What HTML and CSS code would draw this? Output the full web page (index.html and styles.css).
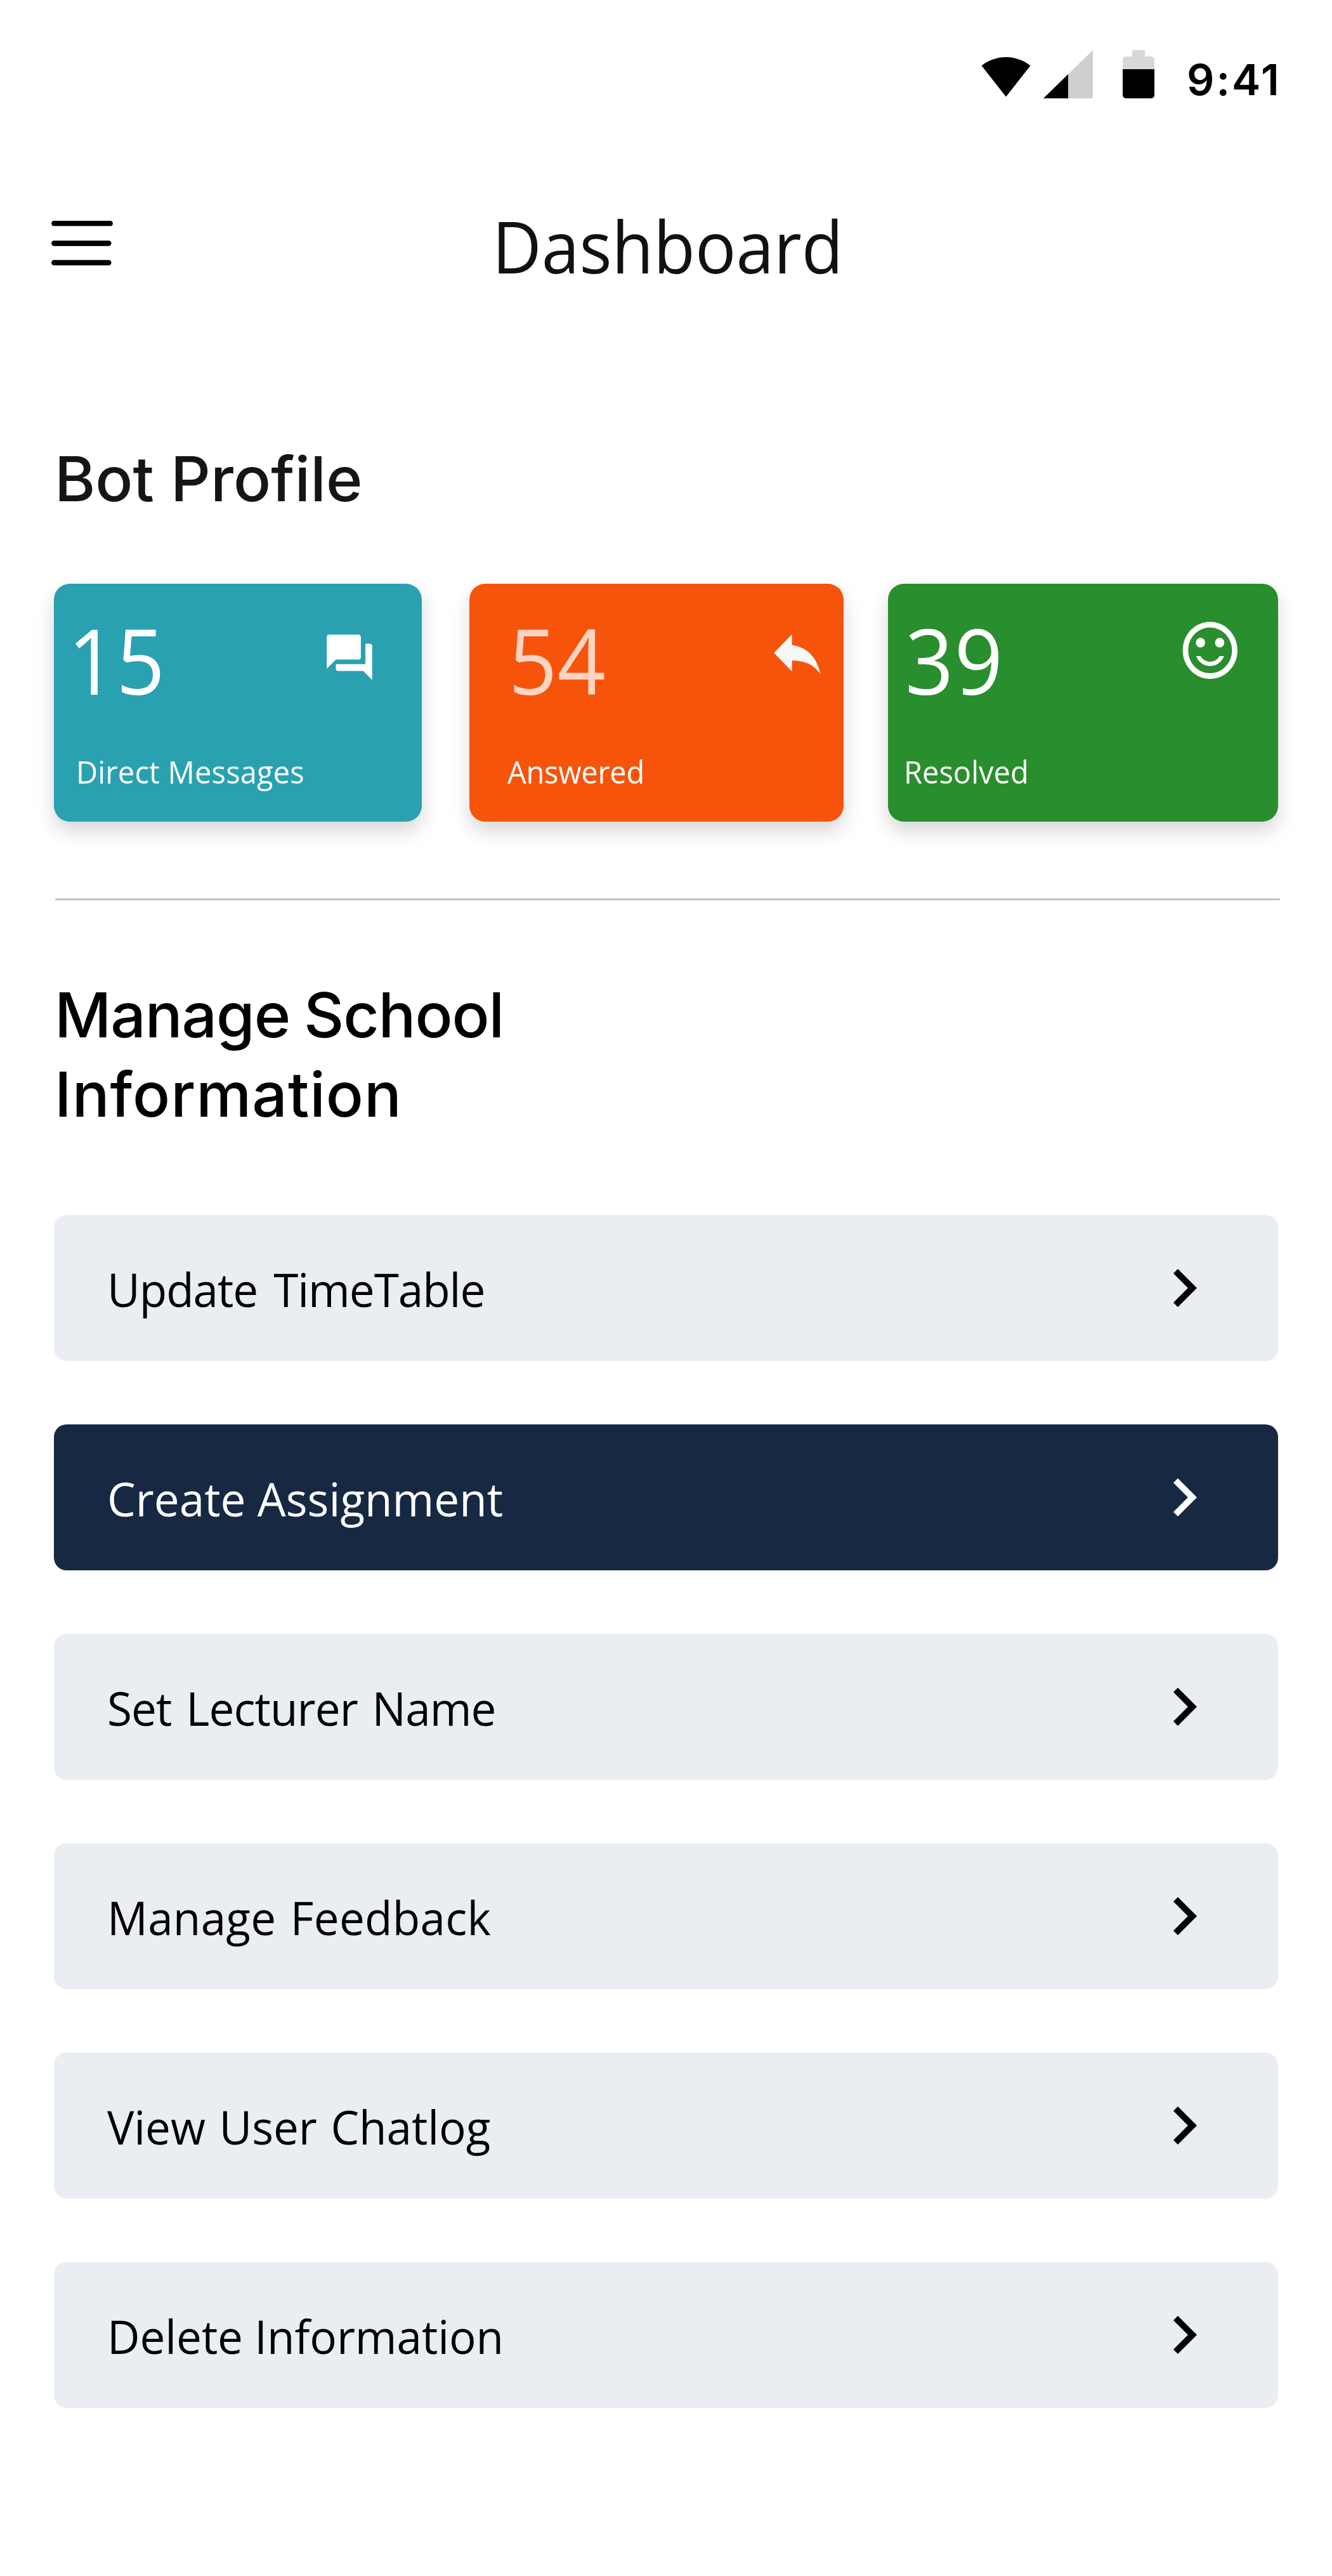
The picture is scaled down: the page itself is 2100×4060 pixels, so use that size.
FILE: index.html
```html
<!DOCTYPE html>
<html lang="en">
<head>
<meta charset="utf-8">
<title>Dashboard</title>
<link rel="stylesheet" href="styles.css">
</head>
<body>
<div class="status-bar">
  <svg class="wifi" width="78" height="76" viewBox="0 0 78 76"><path d="M0.5 24.500C23.500 6.500 54.500 6.500 77.500 24.500L39 73.500Z"/></svg>
  <svg class="signal" width="78" height="76" viewBox="0 0 78 76"><path d="M0 76L78 0V76Z" fill="#cfcfcf"/><path d="M0 76L39 38V76Z"/></svg>
  <svg class="battery" width="50" height="76" viewBox="0 0 50 76"><path d="M15 0H35V10H45Q50 10 50 16V30H0V16Q0 10 5 10H15Z" fill="#d8d8d8"/><path d="M0 30H50V70Q50 76 44 76H6Q0 76 0 70Z"/></svg>
  <span class="time">9:41</span>
</div>

<header class="header">
  <svg class="menu" width="104" height="76" viewBox="0 0 104 76" stroke="#000" stroke-width="8.300" stroke-linecap="round"><path d="M7.200 7.200H95.800M7.200 38.500H93.400M7.200 69H93.400"/></svg>
  <h1 class="title">Dashboard</h1>
</header>

<main>
  <h2 class="heading">Bot Profile</h2>
  <section class="cards">
    <article class="card card-messages">
      <div class="card-text">
        <div class="number">15</div>
        <div class="label">Direct Messages</div>
      </div>
      <svg class="card-icon" width="86" height="86" viewBox="0 0 24 24" fill="#fff"><path d="M21 6h-2v9H6v2c0 .55.45 1 1 1h11l4 4V7c0-.55-.45-1-1-1zm-4 6V3c0-.55-.45-1-1-1H3c-.55 0-1 .45-1 1v14l4-4h10c.55 0 1-.45 1-1z"/></svg>
    </article>
    <article class="card card-answered">
      <div class="card-text">
        <div class="number">54</div>
        <div class="label">Answered</div>
      </div>
      <svg class="card-icon" width="97.500" height="100" viewBox="0 0 24 24" preserveAspectRatio="none" fill="#f7f7f7"><path d="M10 9V5l-7 7 7 7v-4.100c5 0 8.500 1.600 11 5.100-1-5-4-10-11-11z"/></svg>
    </article>
    <article class="card card-resolved">
      <div class="card-text">
        <div class="number">39</div>
        <div class="label">Resolved</div>
      </div>
      <svg class="card-icon" width="103.600" height="108" viewBox="0 0 24 24" preserveAspectRatio="none" fill="#fff"><circle cx="15.500" cy="9.300" r="1.700"/><circle cx="8.500" cy="9.300" r="1.700"/><path d="M12 16c-1.480 0-2.750-.81-3.450-2H6.880c.8 2.050 2.790 3.500 5.120 3.500s4.320-1.450 5.120-3.500h-1.670c-.69 1.190-1.970 2-3.450 2zM12 2C6.470 2 2 6.480 2 12s4.470 10 10 10 10-4.480 10-10S17.520 2 12 2zm0 18c-4.420 0-8-3.580-8-8s3.580-8 8-8 8 3.580 8 8-3.580 8-8 8z"/></svg>
    </article>
  </section>

  <div class="divider"></div>

  <h2 class="heading heading-manage"><span class="line-one">Manage School</span><br><span class="line-two">Information</span></h2>
  <nav class="actions">
    <a class="action"><span class="name">Update TimeTable</span><svg class="chevron" viewBox="0 0 24 24"><path d="M8.590 16.590 13.170 12 8.590 7.410 10 6l6 6-6 6z"/></svg></a>
    <a class="action active"><span class="name">Create Assignment</span><svg class="chevron" viewBox="0 0 24 24"><path d="M8.590 16.590 13.170 12 8.590 7.410 10 6l6 6-6 6z"/></svg></a>
    <a class="action"><span class="name">Set Lecturer Name</span><svg class="chevron" viewBox="0 0 24 24"><path d="M8.590 16.590 13.170 12 8.590 7.410 10 6l6 6-6 6z"/></svg></a>
    <a class="action"><span class="name">Manage Feedback</span><svg class="chevron" viewBox="0 0 24 24"><path d="M8.590 16.590 13.170 12 8.590 7.410 10 6l6 6-6 6z"/></svg></a>
    <a class="action"><span class="name">View User Chatlog</span><svg class="chevron" viewBox="0 0 24 24"><path d="M8.590 16.590 13.170 12 8.590 7.410 10 6l6 6-6 6z"/></svg></a>
    <a class="action"><span class="name">Delete Information</span><svg class="chevron" viewBox="0 0 24 24"><path d="M8.590 16.590 13.170 12 8.590 7.410 10 6l6 6-6 6z"/></svg></a>
  </nav>
</main>
</body>
</html>
```
FILE: styles.css
```css
* { box-sizing: border-box; }

body {
  margin: 0;
  width: 2100px;
  min-height: 4060px;
  background: #fff;
  color: #000;
  font-family: "Open Sans", "Noto Sans", sans-serif;
}

svg { display: block; flex: none; }
h1, h2 { margin: 0; font-weight: 400; }

/* Status bar */
.status-bar {
  display: flex;
  align-items: flex-start;
  height: 306px;
  padding: 79px 0 0 1547px;
}
.signal { margin-left: 20px; }
.battery { margin-left: 47px; }
.time {
  margin-left: 51px;
  font: 600 68px/92px "Inter", sans-serif;
  letter-spacing: 2.9px;
}

/* Header */
.header {
  display: flex;
  align-items: flex-start;
  height: 160px;
  padding-left: 78px;
}
.menu { margin-top: 39px; }
.title {
  margin-left: 593.6px;
  color: #111;
  font-size: 113px;
  line-height: 162px;
  transform: scaleX(.949);
  transform-origin: left;
}

/* Section headings */
.heading {
  margin: 226px 0 0 86px;
  color: #151515;
  font: 500 98px/125px "Inter", sans-serif;
}
.heading-manage { margin-top: 118px; color: #000; }
.line-one { letter-spacing: -1.15px; word-spacing: -3px; }
.line-two { letter-spacing: .95px; }

/* Profile cards */
.cards {
  display: flex;
  margin: 103px 0 0 85px;
}
.card {
  display: flex;
  justify-content: space-between;
  align-items: flex-start;
  height: 375px;
  padding-top: 19.5px;
  border-radius: 25px;
  color: #fff;
  box-shadow: 0 15px 30px rgba(0, 0, 0, .16);
}
.card-messages { width: 580px; background: #29a1b0; }
.card-answered { width: 590px; margin-left: 75px; background: #f6540b; }
.card-resolved { width: 615px; margin-left: 70px; background: #298e2d; }

.number, .label {
  white-space: nowrap;
  transform-origin: left;
}
.number {
  font-size: 143px;
  line-height: 200px;
  transform: scaleX(.935);
}
.label {
  margin-top: 41px;
  font-size: 49.5px;
  line-height: 70px;
  transform: scaleX(.95);
}
.card-messages .number { margin-left: 22px; }
.card-messages .label { margin-left: 35px; letter-spacing: .2px; }
.card-messages .card-icon { margin: 53px 71px 0 0; }
.card-answered .number { margin-left: 62px; color: #fdd3c2; }
.card-answered .label { margin-left: 60.4px; letter-spacing: -.3px; }
.card-answered .card-icon { margin: 39.7px 24.7px 0 0; }
.card-resolved .number { margin-left: 27px; letter-spacing: 1.5px; }
.card-resolved .label { margin-left: 25px; }
.card-resolved .card-icon { margin: 31.5px 55px 0 0; }

.divider {
  width: 1931px;
  height: 3px;
  margin: 121px 0 0 87px;
  border: solid #cbcbcb;
  border-width: 1px 0;
  background: #b7b7b7;
}

/* Action list */
.actions {
  display: flex;
  flex-direction: column;
  gap: 100px;
  width: 1930px;
  margin: 128px 0 0 85px;
}
.action {
  display: flex;
  justify-content: space-between;
  align-items: flex-start;
  height: 230px;
  padding: 0 88px 0 84px;
  border-radius: 20px;
  background: #eaedf2;
}
.action.active { background: #172843; color: #fff; }
.name {
  font-size: 74px;
  line-height: 233px;
  white-space: nowrap;
  transform: scaleX(.96);
  transform-origin: left;
}
.action:nth-child(1) .name { letter-spacing: -1.1px; word-spacing: 8px; }
.action:nth-child(3) .name { letter-spacing: -.95px; word-spacing: 5.5px; }
.action:nth-child(4) .name { letter-spacing: .25px; word-spacing: 4px; }
.action:nth-child(5) .name { letter-spacing: -.1px; word-spacing: 3.5px; }
.action:nth-child(6) .name { letter-spacing: -.1px; }
.chevron {
  width: 120px;
  height: 120px;
  margin-top: 55px;
  fill: currentColor;
}
```
